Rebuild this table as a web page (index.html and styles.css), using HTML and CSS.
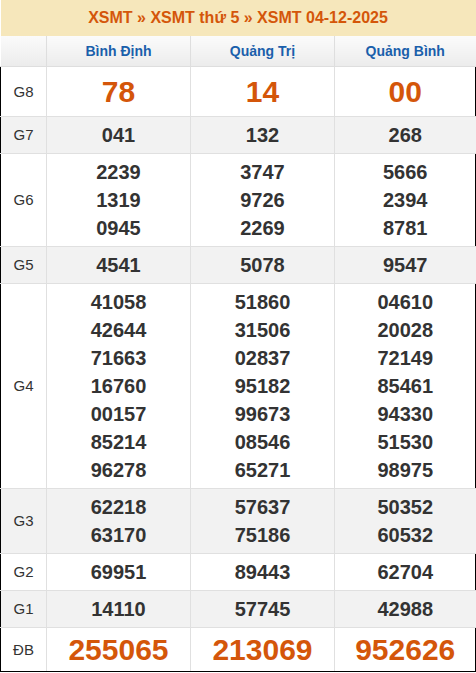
FILE: index.html
```html
<!DOCTYPE html>
<html lang="vi">
<head>
<meta charset="utf-8">
<title>XSMT 04-12-2025</title>
<link rel="stylesheet" href="styles.css">
</head>
<body>
<div class="box">
  <table class="kq">
    <colgroup>
      <col class="c-label"><col class="c-prov"><col class="c-prov"><col class="c-last">
    </colgroup>
    <thead>
      <tr class="title-row"><th colspan="4" class="title">XSMT » XSMT thứ 5 » XSMT 04-12-2025</th></tr>
      <tr class="prov-row"><th></th><th>Bình Định</th><th>Quảng Trị</th><th>Quảng Bình</th></tr>
    </thead>
    <tbody>
      <tr class="big g8"><td class="lbl">G8</td><td>78</td><td>14</td><td>00</td></tr>
      <tr class="alt"><td class="lbl">G7</td><td>041</td><td>132</td><td>268</td></tr>
      <tr><td class="lbl">G6</td><td>2239<br>1319<br>0945</td><td>3747<br>9726<br>2269</td><td>5666<br>2394<br>8781</td></tr>
      <tr class="alt"><td class="lbl">G5</td><td>4541</td><td>5078</td><td>9547</td></tr>
      <tr><td class="lbl">G4</td><td>41058<br>42644<br>71663<br>16760<br>00157<br>85214<br>96278</td><td>51860<br>31506<br>02837<br>95182<br>99673<br>08546<br>65271</td><td>04610<br>20028<br>72149<br>85461<br>94330<br>51530<br>98975</td></tr>
      <tr class="alt"><td class="lbl">G3</td><td>62218<br>63170</td><td>57637<br>75186</td><td>50352<br>60532</td></tr>
      <tr><td class="lbl">G2</td><td>69951</td><td>89443</td><td>62704</td></tr>
      <tr class="alt"><td class="lbl">G1</td><td>14110</td><td>57745</td><td>42988</td></tr>
      <tr class="big db"><td class="lbl">ĐB</td><td>255065</td><td>213069</td><td>952626</td></tr>
    </tbody>
  </table>
</div>
</body>
</html>
```
FILE: styles.css
```css
html, body {
  margin: 0;
  padding: 0;
  background: #fff;
}
.box {
  width: 475px;
  border-right: 1px solid #000;
  border-bottom: 1px solid #000;
}
.kq {
  width: 475px;
  border-collapse: collapse;
  table-layout: fixed;
  font-family: "Liberation Sans", Arial, sans-serif;
  color: #333;
}
.c-label { width: 46px; }
.c-prov { width: 144px; }
.c-last { width: 141px; }
.title {
  height: 36px;
  padding: 0;
  background: #f6e7bb;
  color: #d4560a;
  font-size: 16px;
  font-weight: bold;
  text-align: center;
  vertical-align: middle;
}
.prov-row th {
  height: 30px;
  padding: 0;
  background: linear-gradient(#fbfbfb, #ececec);
  border-right: 1px solid #dedede;
  border-bottom: 1px solid #dedede;
  color: #1a5fab;
  font-size: 14px;
  font-weight: bold;
  text-align: center;
  vertical-align: middle;
}
.prov-row th:last-child { border-right: none; }
tbody td {
  padding: 4px 0;
  border-right: 1px solid #e0e0e0;
  border-bottom: 1px solid #e0e0e0;
  font-size: 20px;
  font-weight: bold;
  line-height: 28px;
  text-align: center;
  vertical-align: middle;
}
tbody td:last-child { border-right: none; }
tbody tr:last-child td { border-bottom: none; }
tbody td.lbl {
  border-left: 1px solid #000;
  font-size: 15px;
  font-weight: normal;
  color: #333;
}
tbody tr.alt td { background: #f2f2f2; }
.big td {
  font-size: 30px;
  color: #d4560a;
}
.g8 td { line-height: 41px; }
.db td { line-height: 35px; }
```
